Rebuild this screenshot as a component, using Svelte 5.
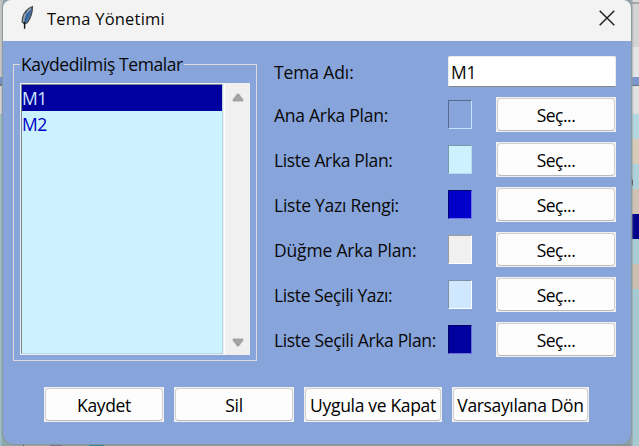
<script>
  const rows = [
    { label: 'Ana Arka Plan:', c: '#88a5db', dark: '#566a90', light: '#c6e4fc', ls: -0.27 },
    { label: 'Liste Arka Plan:', c: '#ccf2ff', dark: '#7c9aa6', light: '#b9dcec', ls: -0.35 },
    { label: 'Liste Yazı Rengi:', c: '#0000c8', dark: '#000070', light: '#7373f0', ls: -0.24 },
    { label: 'Düğme Arka Plan:', c: '#f0f0f0', dark: '#9c9c9c', light: '#ffffff', ls: -0.18 },
    { label: 'Liste Seçili Yazı:', c: '#d0e8ff', dark: '#8090a0', light: '#ffffff', ls: -0.36 },
    { label: 'Liste Seçili Arka Plan:', c: '#00009e', dark: '#000060', light: '#6e6ed8', ls: -0.34 }
  ];
  const actions = [
    { label: 'Kaydet', w: 120, ls: -0.35 },
    { label: 'Sil', w: 120, ls: -0.3 },
    { label: 'Uygula ve Kapat', w: 138, ls: -0.32 },
    { label: 'Varsayılana Dön', w: 137, ls: -0.36 }
  ];
</script>

<div class="desktop">
  <div class="window">
    <header>
      <svg class="feather" width="16" height="26" viewBox="0 0 16 26">
        <path d="M12.500 1.500C8 3 3.200 8 2.500 13L2.200 17L4.500 19L7.500 17.500C10 14 12.500 9 12.500 1.500Z" fill="#4074ad" stroke="#4b4b48" stroke-width="1.200" />
        <path d="M10.500 3.500L7 7.500M5.500 8.500L4 13M3.800 13L3.800 17" stroke="#a8aaa4" stroke-width="1.300" fill="none" />
        <path d="M10.500 6C7.500 10 5.500 14 4.500 18" stroke="#294d75" stroke-width=".9" fill="none" />
        <path d="M4.600 17V23.800" stroke="#101317" stroke-width="1.400" fill="none" />
      </svg>
      <span class="title">Tema Yönetimi</span>
      <svg class="close" width="16" height="16" viewBox="0 0 16 16"><path d="M.7.7L15.300 15.300M15.300.7L.7 15.300" stroke="#1b1b1b" stroke-width="1.400" /></svg>
    </header>
    <main>
      <fieldset>
        <legend>Kaydedilmiş Temalar</legend>
        <div class="listwrap">
          <div class="list">
            <div class="item selected">M1</div>
            <div class="item">M2</div>
          </div>
          <div class="scroll">
            <svg width="12" height="9" viewBox="0 0 12 9"><path d="M5 .8Q6 0 7 .8L11.300 6.500Q12 8.500 10.500 8.500H1.500Q0 8.500.7 6.500Z" fill="#a3a3a3" /></svg>
            <svg width="12" height="9" viewBox="0 0 12 9"><path d="M5 8.200Q6 9 7 8.200L11.300 2.500Q12 .5 10.500 .5H1.500Q0 .5.7 2.500Z" fill="#a3a3a3" /></svg>
          </div>
        </div>
      </fieldset>
      <section>
        <div class="row name"><span class="label wide">Tema Adı:</span><div class="entry">M1</div></div>
        {#each rows as r}
          <div class="row">
            <span class="label" style:letter-spacing="{r.ls}px">{r.label}</span>
            <span class="swatch" style:background={r.c} style:border-color="{r.dark} {r.light} {r.light} {r.dark}"></span>
            <button class="pick"><span>Seç...</span></button>
          </div>
        {/each}
      </section>
    </main>
    <footer>
      {#each actions as a}
        <button style:width="{a.w}px" style:letter-spacing="{a.ls}px"><span>{a.label}</span></button>
      {/each}
    </footer>
  </div>
</div>

<style>
  .desktop {
    box-sizing: border-box;
    width: 639px;
    height: 446px;
    padding: 0 8px 2px 3px;
    overflow: hidden;
    font: 17.5px/24px "Open Sans", "Noto Sans", sans-serif;
    letter-spacing: -0.3px;
    color: #080808;
    background:
      linear-gradient(90deg, #c5c5c5 0 1px, #b3b3b3 3px, transparent 3px) 0 0 / 3px 77px no-repeat,
      linear-gradient(#748fc2 0 7px, #6b7688 7px) 0 77px / 3px 9px no-repeat,
      linear-gradient(90deg, #d9d9d9, #b4b4b4) 0 86px / 3px 28px no-repeat,
      linear-gradient(90deg, transparent 0 23px, #555 23px 24px, #a09ea0 24px 50px, #6f7291 50px 62px, #8a9798 62px 89px, #2f7f9c 89px 104px, #8a9798 104px) 0 444px / 631px 2px no-repeat,
      radial-gradient(ellipse at left, #5d5a54 60%, transparent) 631px 179px / 2px 7px no-repeat,
      linear-gradient(#6f7f84, #6f7f84) 631px 173px / 1px 2px no-repeat,
      linear-gradient(90deg, #8f9b9d, #8f9b9d80 1px, transparent 3px) 631px 0 / 8px 446px no-repeat,
      linear-gradient(#dadada 0 2px, #a6a6a6 2px 4px, #d3d3d3 4px 47px, #e4e4e4 47px 77px, #7b97ce 77px 85px, #66728a 85px 86px, #e0e0e0 86px 114px, #b4d8e2 114px 139px, #d9cbb9 139px 164px, #aed2db 164px 189px, #d1c3b4 189px 214px, #00008b 214px 239px, #a9cdd6 239px 264px, #cdbfb1 264px 289px, #a6cad3 289px) 631px 0 / 8px 446px no-repeat,
      linear-gradient(90deg, #a0c4cc, #8ca5a9 3px);
  }
  .window {
    height: 444px;
    width: 628px;
    background: #88a5db;
    border-radius: 8px 8px 11px 11px;
    overflow: hidden;
    box-shadow: 0 0 1px 1px #8b989b;
  }
  header {
    box-sizing: border-box;
    height: 41px;
    background: #f3f3f3;
    display: flex;
    align-items: flex-start;
    padding: 5px 16.500px 0 17px;
  }
  .title { margin: 2px 0 0 11px; font-size: 16.5px; letter-spacing: 0.22px; }
  .close { margin: 5px 0 0 auto; }
  main { display: flex; height: 336px; padding: 0 15px 0 10px; }
  fieldset {
    box-sizing: border-box;
    width: 244px;
    height: 309px;
    margin: 11px 17px 0 0;
    padding: 7px 6px 5px;
    border: 1px solid #dcdcdc;
    min-width: 0;
  }
  legend { padding: 0 1px; line-height: 24px; letter-spacing: -0.4px; }
  .listwrap {
    display: flex;
    box-sizing: border-box;
    height: 272px;
    width: 230px;
    background: #f0f0f0;
    padding: 1px 0 1px 1px;
  }
  .list {
    box-sizing: border-box;
    width: 202px;
    border: 1px solid;
    border-color: #73898f #b4d6e1 #b4d6e1 #73898f;
    background: #ccf2ff;
  }
  .item { height: 26px; line-height: 27px; color: #0000c8; letter-spacing: -0.4px; }
  .selected { background: #00009e; color: #d0e8ff; }
  .scroll {
    flex: 1;
    margin-left: 1px;
    border-left: 1px solid #fff;
    display: flex;
    flex-direction: column;
    align-items: center;
    justify-content: space-between;
    padding: 9px 0 7px;
  }
  section { width: 342px; padding-top: 15px; }
  .row { display: flex; height: 35px; margin-bottom: 10px; align-items: center; }
  .name { height: 31px; }
  .label { width: 174px; flex: none; white-space: nowrap; padding-top: 1px; }
  .wide { letter-spacing: -0.12px; }
  .entry {
    box-sizing: border-box;
    width: 168px;
    height: 31px;
    background: #fff;
    border: 1px solid #ececec;
    border-bottom: 1px solid #858585;
    border-radius: 2px;
    padding: 3px 2px;
  }
  .swatch { box-sizing: border-box; width: 24px; height: 29px; border: 1px solid; margin-right: 24px; }
  button {
    box-sizing: border-box;
    width: 120px;
    height: 35px;
    padding: 1px;
    margin: 0;
    border: 0;
    background: #f0f0f0;
    font: inherit;
    letter-spacing: inherit;
    color: #000;
    display: block;
    flex: none;
  }
  .pick { letter-spacing: -0.5px; }
  button span {
    display: block;
    box-sizing: border-box;
    height: 33px;
    line-height: 33px;
    white-space: nowrap;
    border: 1px solid #d0d0d0;
    border-bottom-color: #bababa;
    border-radius: 4px;
    background: #fdfdfd;
    text-align: center;
  }
  footer { display: flex; gap: 10px; padding: 10px 0 0 41px; }
</style>
